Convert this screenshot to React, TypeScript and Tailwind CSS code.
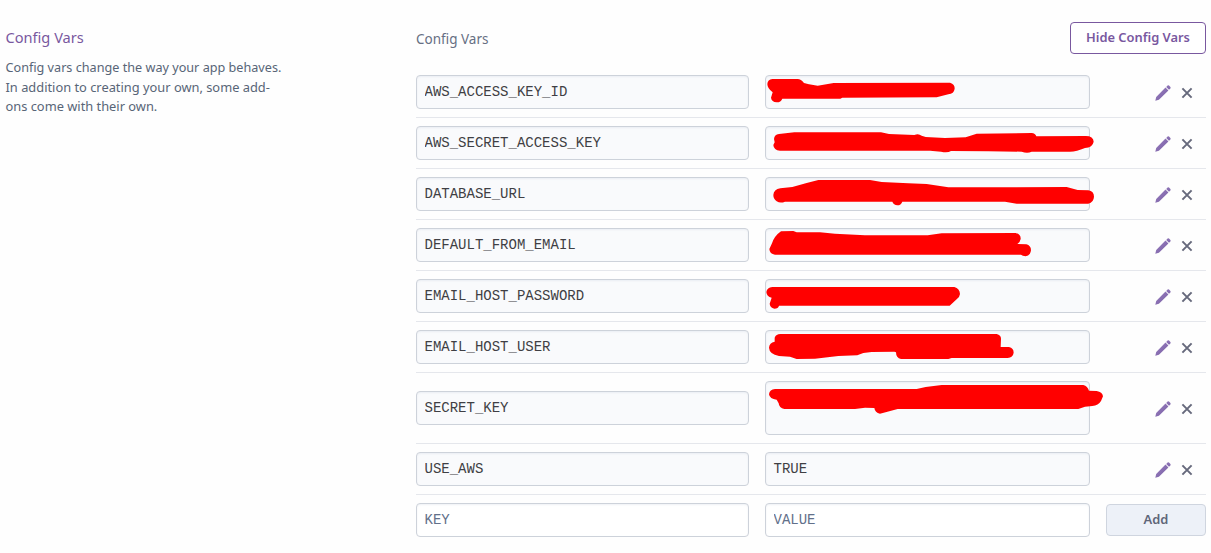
type Mark = { viewBox: string; d: string };
type ConfigVar = { name: string; value?: string; tall?: boolean; mark?: Mark };

const vars: ConfigVar[] = [
  {
    name: 'AWS_ACCESS_KEY_ID',
    mark: {
      viewBox: '0 0 1050 162',
      d: 'M37 57Q38 43 52 42L128 42Q138 42 147 54L162 58L188 62L236 54L585 53Q600 57 599 71Q597 86 580 88L545 97L262 98L256 101L82 101Q78 112 65 112Q50 111 48 98L53 82Q37 70 37 57Z',
    },
  },
  {
    name: 'AWS_SECRET_ACCESS_KEY',
    mark: {
      viewBox: '0 153 1050 162',
      d: 'M57 222Q58 208 72 207L118 202L378 202L402 207L478 210Q490 204 500 212L512 216L570 219L632 217L665 206L830 204Q841 205 844 214L990 213Q1015 212 1016 230Q1013 247 990 249Q965 260 945 260L830 260Q817 266 800 260L700 259L588 258Q578 264 558 260L525 257L75 257Q56 256 55 240L59 232Z',
    },
  },
  {
    name: 'DATABASE_URL',
    mark: {
      viewBox: '0 6 1050 162',
      d: 'M55 90Q56 73 76 70L112 66L155 54L190 45L345 45L380 51L460 55L515 57L580 67L935 66L968 75L1000 76Q1017 79 1017 95Q1016 112 1000 116L785 116L750 110L442 110Q438 121 427 121Q416 120 412 110L90 110Q76 116 65 109Q55 102 55 90Z',
    },
  },
  {
    name: 'DEFAULT_FROM_EMAIL',
    mark: {
      viewBox: '0 159 1050 162',
      d: 'M43 252L51 235Q58 213 78 199L115 198L125 202L195 202L240 206L330 211L518 211L560 205L782 204Q798 208 797 222Q796 230 787 237L814 238Q828 242 828 256Q826 272 812 274Q802 273 798 269L60 269Q44 267 43 252Z',
    },
  },
  {
    name: 'EMAIL_HOST_PASSWORD',
    mark: {
      viewBox: '0 -18 1050 162',
      d: 'M34 51Q36 37 52 36L598 36Q614 41 615 57Q614 67 605 73L584 92L72 92Q70 101 58 101Q45 98 44 86L50 68Q35 65 34 51Z',
    },
  },
  {
    name: 'EMAIL_HOST_USER',
    mark: {
      viewBox: '0 135 1050 162',
      d: 'M42 218Q43 203 59 200L59 188Q63 177 76 177L725 177Q738 180 738 191L737 216L762 216Q776 219 776 233Q774 247 758 249L590 249L580 252L438 252Q423 249 423 232L418 230L350 231L325 234L307 241L250 243L180 251L125 252L105 245L72 243Q43 237 42 218Z',
    },
  },
  {
    name: 'SECRET_KEY',
    tall: true,
    mark: {
      viewBox: '0 3 1050 162',
      d: 'M42 73Q44 58 60 57L485 57L512 51L560 45L985 45Q998 49 1002 62L1025 63Q1042 66 1044 79L1038 93Q1030 106 1012 108L990 110L970 117L428 117L375 131Q360 128 358 114L330 113L300 117L88 117Q72 114 71 100L65 89Q44 88 42 73Z',
    },
  },
  { name: 'USE_AWS', value: 'TRUE' },
];

const field =
  'block w-full rounded-[4px] border border-[#cdd2da] px-[7.5px] font-["Liberation_Mono",monospace] text-[14px] leading-[30px] text-[#3f3f44] outline-none shadow-[inset_0_1px_2px_rgba(207,215,227,0.35)] placeholder:text-[#62708a] placeholder:opacity-100';

function Pencil() {
  return (
    <svg className="h-4 w-4" viewBox="0 0 16 16">
      <defs>
        <linearGradient id="pencil" x1="0" y1="0" x2="1" y2="1">
          <stop offset="0" stopColor="#9e84c4" />
          <stop offset="1" stopColor="#73599f" />
        </linearGradient>
      </defs>
      <path
        fill="url(#pencil)"
        d="M0.3 15.7L1.2 12.1L10.5 2.6L13.4 5.5L3.9 14.8ZM11.2 2L12.6 0.6Q13.3 0.1 14 0.6L15.4 2Q15.9 2.7 15.4 3.4L14 4.8Z"
      />
    </svg>
  );
}

function Cross() {
  return (
    <svg className="h-3 w-3" viewBox="0 0 12 12">
      <path d="M1.4 1.4L10.6 10.6M10.6 1.4L1.4 10.6" stroke="#66697c" strokeWidth="2" />
    </svg>
  );
}

function Row({ item }: { item: ConfigVar }) {
  return (
    <div className="flex items-center gap-4 border-b border-[#e5e7ec] py-2">
      <div className="w-[333px]">
        <input readOnly value={item.name} className={`${field} h-[34px] bg-[#f9fafc]`} />
      </div>
      <div className="relative w-[325px]">
        <textarea
          readOnly
          value={item.value ?? ''}
          className={`${field} resize-none overflow-hidden bg-[#f9fafc] pt-px ${item.tall ? 'h-[54px]' : 'h-[34px]'}`}
        />
        {item.mark && (
          <svg
            className="pointer-events-none absolute -left-[10px] -top-[10px] h-[54px] w-[350px]"
            viewBox={item.mark.viewBox}
          >
            <path d={item.mark.d} fill="#ff0000" />
          </svg>
        )}
      </div>
      <div className="flex flex-1 items-center justify-end gap-[10px] pr-[13px] pt-[2px]">
        <button aria-label="Edit"><Pencil /></button>
        <button aria-label="Delete"><Cross /></button>
      </div>
    </div>
  );
}

export default function App() {
  return (
    <div className="flex h-[553px] w-[1211px] overflow-hidden bg-[#fefefe] pl-[5px] font-['Noto_Sans',sans-serif]">
      <aside className="w-[411px] shrink-0 pl-[0.5px] pt-[25px]">
        <h2 className="text-[14.6px] leading-6 text-[#79589f]">Config Vars</h2>
        <p className="mt-[9px] w-[290px] text-[12.65px] leading-[19.5px] text-[#586577]">
          Config vars change the way your app behaves.
          <br />
          <span className="text-[12.85px]">
            In addition to creating your own, some add-
            <br />
            ons come with their own.
          </span>
        </p>
      </aside>
      <main className="w-[790px] shrink-0">
        <header className="flex h-[67px] items-start justify-between pt-[22px]">
          <h3 className="pt-[7px] text-[13.5px] leading-5 text-[#666f83]">Config Vars</h3>
          <button className="h-8 w-[136px] rounded-[4px] border border-[#79589f] bg-white pb-px text-[12.9px] font-semibold leading-none text-[#79589f]">
            Hide Config Vars
          </button>
        </header>
        {vars.map((item) => (
          <Row key={item.name} item={item} />
        ))}
        <div className="flex items-center gap-4 pt-2">
          <div className="w-[333px]">
            <input placeholder="KEY" className={`${field} h-[34px] bg-white`} />
          </div>
          <div className="w-[325px]">
            <input placeholder="VALUE" className={`${field} h-[34px] bg-white`} />
          </div>
          <button className="h-8 w-[100px] rounded-[4px] border border-[#cfd5df] bg-[#edf1f8] pb-px text-[12.9px] font-semibold leading-none text-[#5f6678]">
            Add
          </button>
        </div>
      </main>
    </div>
  );
}
